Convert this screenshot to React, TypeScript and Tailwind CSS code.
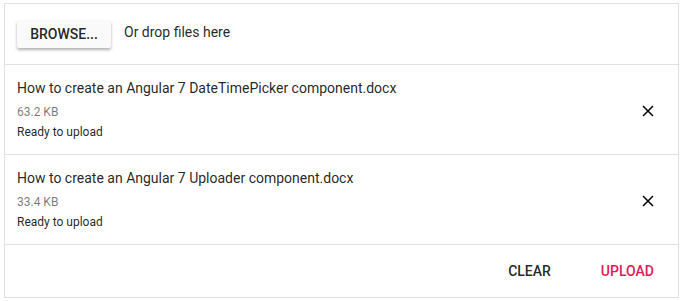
import React from "react";

type FileItem = { name: string; size: string; status: string };

const FILES: FileItem[] = [
  {
    name: "How to create an Angular 7 DateTimePicker component.docx",
    size: "63.2 KB",
    status: "Ready to upload",
  },
  {
    name: "How to create an Angular 7 Uploader component.docx",
    size: "33.4 KB",
    status: "Ready to upload",
  },
];

function CloseIcon() {
  return (
    <svg width="12" height="12" viewBox="0 0 12 12" fill="none">
      <path d="M1 1L11 11M11 1L1 11" stroke="#000" strokeWidth="1.5" />
    </svg>
  );
}

export default function App() {
  return (
    <div className="w-[682px] h-[301px] bg-white pt-[3px] pl-[4px] font-['Roboto',sans-serif]">
      <div className="w-[675px] h-[295px] border border-[#e0e0e0] flex flex-col">
        <div className="h-[61px] flex items-center pl-[12px] border-b border-[#e0e0e0] shrink-0">
          <button className="h-[28px] w-[94px] rounded-[2px] bg-[#fafafa] text-[14px] font-medium text-[rgba(0,0,0,0.87)] shadow-[0_2px_3px_rgba(0,0,0,0.3)] flex items-center justify-center">
            BROWSE...
          </button>
          <span className="ml-[13px] text-[14px] text-[rgba(0,0,0,0.87)] mt-[-4px]">
            Or drop files here
          </span>
        </div>
        {FILES.map((f) => (
          <div
            key={f.name}
            className="h-[90px] border-b border-[#e0e0e0] flex shrink-0 pl-[12px] pr-[24px]"
          >
            <div className="flex-1 flex flex-col pt-[13px]">
              <span className="text-[14px] leading-[20px] text-[rgba(0,0,0,0.87)]">
                {f.name}
              </span>
              <span className="text-[12px] leading-[16px] mt-[6px] text-[rgba(0,0,0,0.54)]">
                {f.size}
              </span>
              <span className="text-[12px] leading-[16px] mt-[4px] text-[rgba(0,0,0,0.87)]">
                {f.status}
              </span>
            </div>
            <div className="flex items-center pt-[2px]">
              <CloseIcon />
            </div>
          </div>
        ))}
        <div className="flex-1 flex items-center justify-end pr-[24px] gap-[50px]">
          <button className="text-[14px] font-medium text-[rgba(0,0,0,0.87)] mt-[1px]">
            CLEAR
          </button>
          <button className="text-[14px] font-medium text-[#e3165b] mt-[1px]">
            UPLOAD
          </button>
        </div>
      </div>
    </div>
  );
}
